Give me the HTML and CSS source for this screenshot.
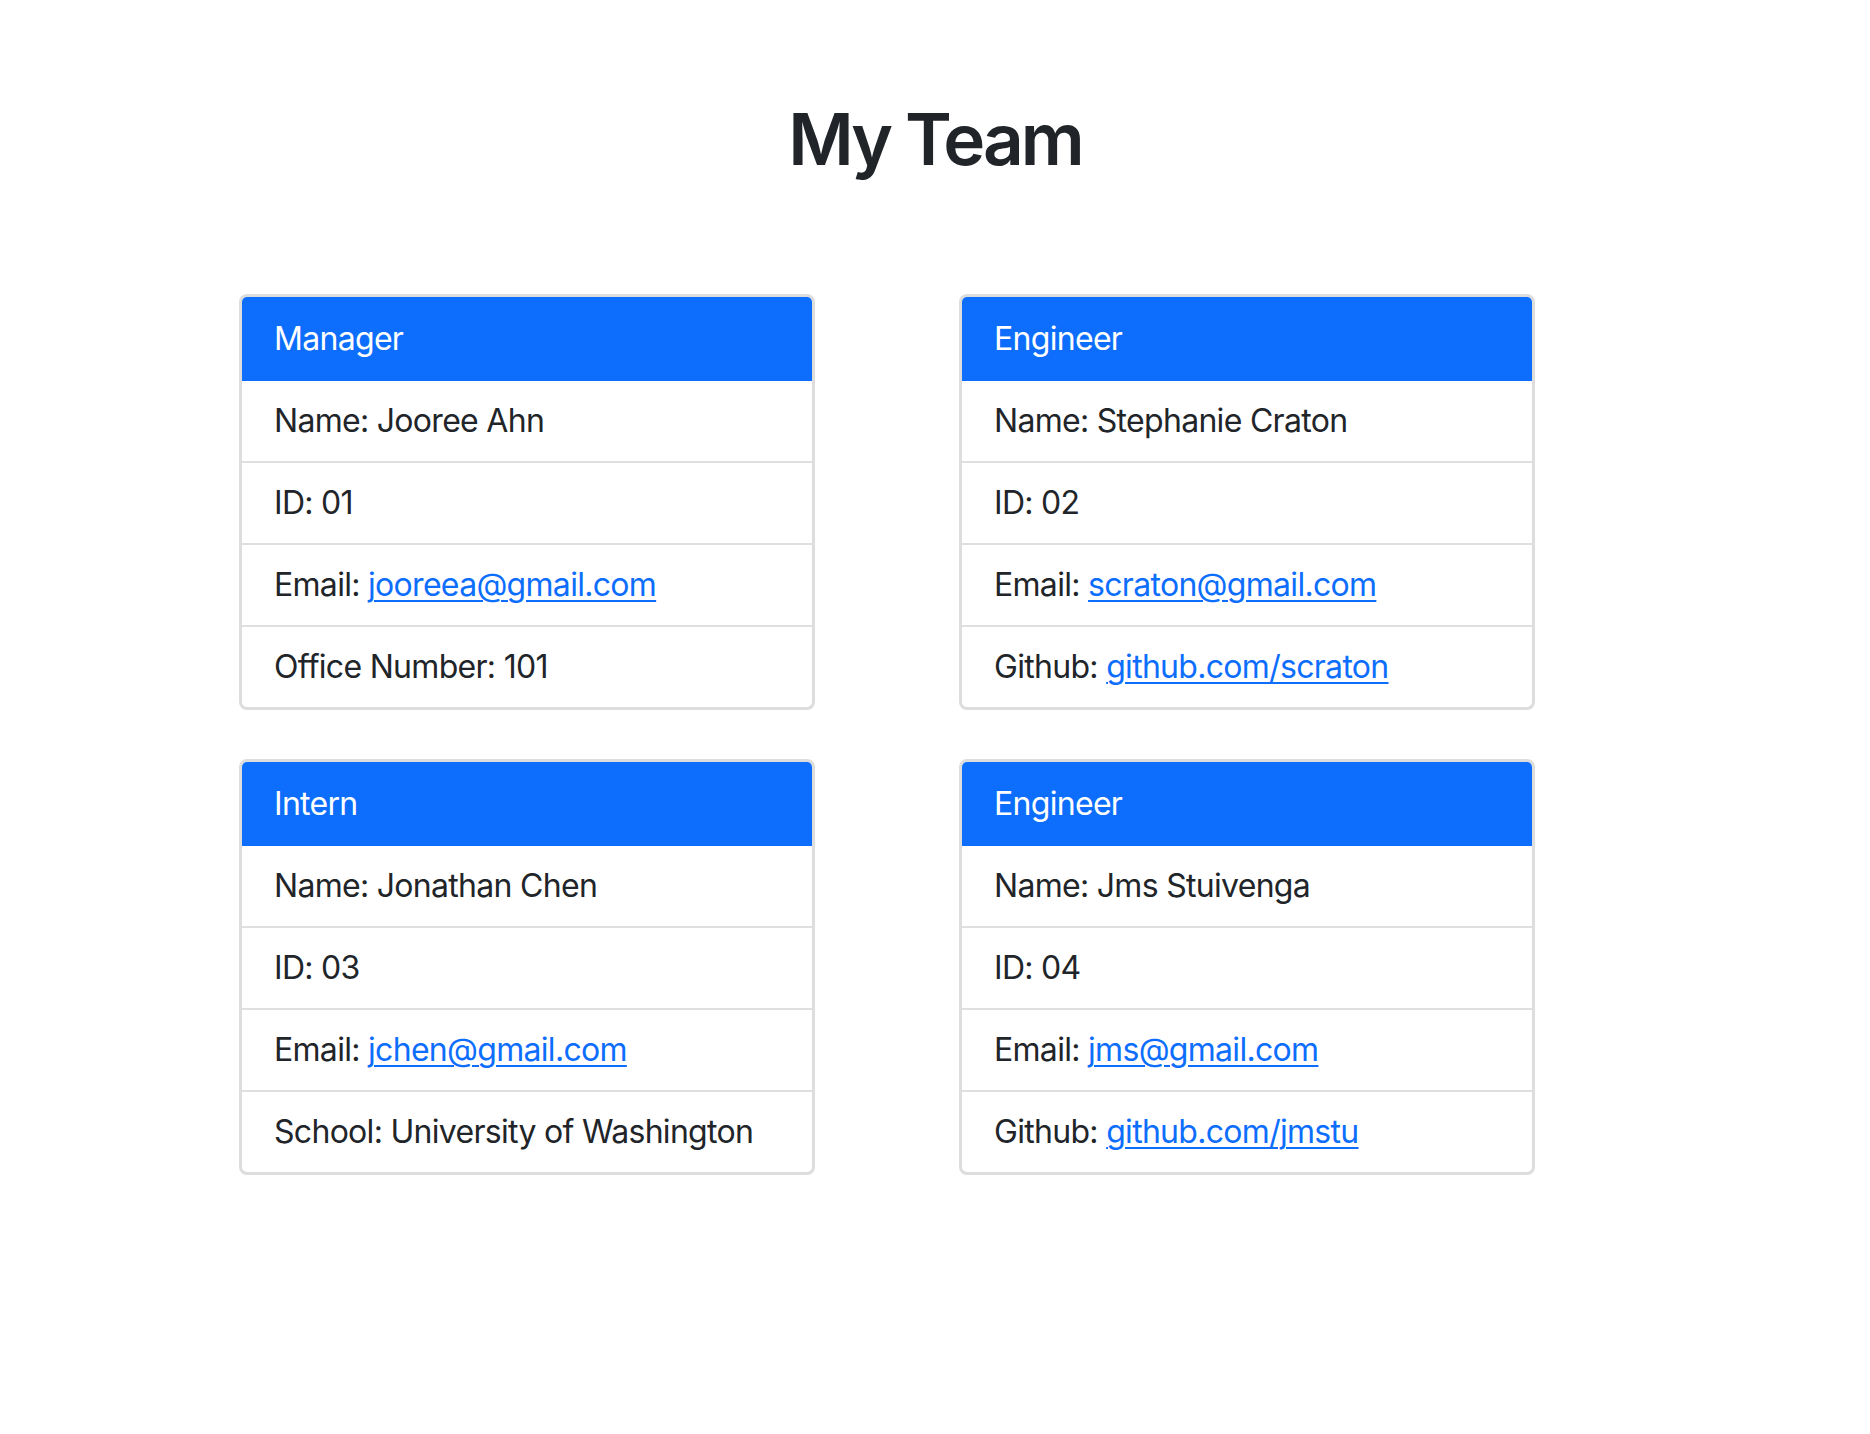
FILE: index.html
```html
<!DOCTYPE html>
<html lang="en">
<head>
<meta charset="utf-8">
<title>My Team</title>
<link rel="stylesheet" href="styles.css">
</head>
<body>
<header class="page-header">
  <h1 class="title">My Team</h1>
</header>
<main class="container">
  <div class="team">
    <div class="col">
      <div class="card">
        <div class="card-header">Manager</div>
        <ul class="list">
          <li class="item">Name: Jooree Ahn</li>
          <li class="item">ID: 01</li>
          <li class="item">Email: <a href="#">jooreea@gmail.com</a></li>
          <li class="item">Office Number: 101</li>
        </ul>
      </div>
    </div>
    <div class="col">
      <div class="card">
        <div class="card-header">Engineer</div>
        <ul class="list">
          <li class="item">Name: Stephanie Craton</li>
          <li class="item">ID: 02</li>
          <li class="item">Email: <a href="#">scraton@gmail.com</a></li>
          <li class="item">Github: <a href="#">github.com/scraton</a></li>
        </ul>
      </div>
    </div>
    <div class="col">
      <div class="card">
        <div class="card-header">Intern</div>
        <ul class="list">
          <li class="item">Name: Jonathan Chen</li>
          <li class="item">ID: 03</li>
          <li class="item">Email: <a href="#">jchen@gmail.com</a></li>
          <li class="item">School: University of Washington</li>
        </ul>
      </div>
    </div>
    <div class="col">
      <div class="card">
        <div class="card-header">Engineer</div>
        <ul class="list">
          <li class="item">Name: Jms Stuivenga</li>
          <li class="item">ID: 04</li>
          <li class="item">Email: <a href="#">jms@gmail.com</a></li>
          <li class="item">Github: <a href="#">github.com/jmstu</a></li>
        </ul>
      </div>
    </div>
  </div>
</main>
</body>
</html>
```
FILE: styles.css
```css
* { box-sizing: border-box; }
html, body {
  margin: 0;
  padding: 0;
  background: #fff;
}
body {
  font-family: Inter, "Noto Sans", "Liberation Sans", sans-serif;
  color: #212529;
  font-size: 32px;
  line-height: 1.5;
}
.page-header {
  padding-top: 97px;
  text-align: center;
}
.title {
  margin: 0;
  font-size: 71px;
  font-weight: 600;
  line-height: 1.2;
  letter-spacing: -3px;
  color: #212529;
}
.container {
  max-width: 1440px;
  margin: 112px auto 0;
  padding: 0 24px;
}
.team {
  display: grid;
  grid-template-columns: 1fr 1fr;
  column-gap: 48px;
  row-gap: 49px;
}
.card {
  width: 576px;
  border: 3px solid #dddddd;
  border-radius: 8px;
  overflow: hidden;
  background: #fff;
}
.card-header {
  background: #0d6efd;
  color: #fff;
  padding: 18px 32px;
  line-height: 48px;
  letter-spacing: -0.7px;
}
.list {
  list-style: none;
  margin: 0;
  padding: 0;
}
.item {
  padding: 16px 32px;
  line-height: 48px;
  border-bottom: 2px solid #dfdfdf;
  letter-spacing: -0.7px;
}
.item:last-child {
  border-bottom: 0;
}
.item a {
  color: #0d6efd;
  text-decoration: underline;
  text-decoration-thickness: 2px;
  text-underline-offset: 4px;
}
```
